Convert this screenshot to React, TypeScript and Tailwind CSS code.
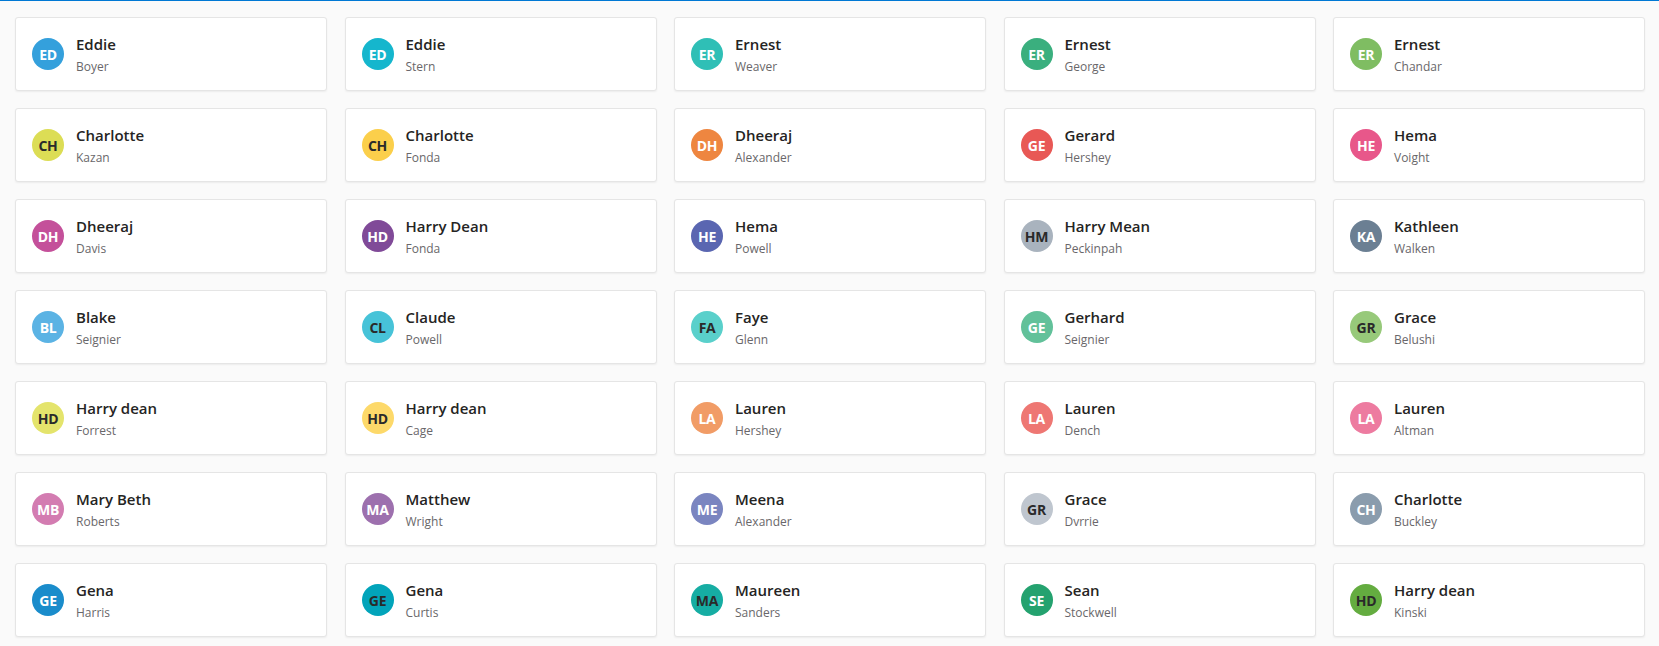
import React from "react";

type Person = {
  first: string;
  last: string;
  color: string;
  dark?: boolean;
};

// one entry per card, row by row
const people: Person[] = [
  { first: "Eddie", last: "Boyer", color: "#34a0dc" },
  { first: "Eddie", last: "Stern", color: "#15b6cd" },
  { first: "Ernest", last: "Weaver", color: "#2fbfb6" },
  { first: "Ernest", last: "George", color: "#3aaf7e" },
  { first: "Ernest", last: "Chandar", color: "#7fbd62" },

  { first: "Charlotte", last: "Kazan", color: "#dcdd55", dark: true },
  { first: "Charlotte", last: "Fonda", color: "#fbcf4b", dark: true },
  { first: "Dheeraj", last: "Alexander", color: "#ee8640" },
  { first: "Gerard", last: "Hershey", color: "#e85855" },
  { first: "Hema", last: "Voight", color: "#e8578a" },

  { first: "Dheeraj", last: "Davis", color: "#c4509a" },
  { first: "Harry Dean", last: "Fonda", color: "#804a98" },
  { first: "Hema", last: "Powell", color: "#5a66b1" },
  { first: "Harry Mean", last: "Peckinpah", color: "#a9b3be", dark: true },
  { first: "Kathleen", last: "Walken", color: "#6b7f93" },

  { first: "Blake", last: "Seignier", color: "#5bb3e4" },
  { first: "Claude", last: "Powell", color: "#47c3d8", dark: true },
  { first: "Faye", last: "Glenn", color: "#5ad0cb", dark: true },
  { first: "Gerhard", last: "Seignier", color: "#62c19a" },
  { first: "Grace", last: "Belushi", color: "#97c97a", dark: true },

  { first: "Harry dean", last: "Forrest", color: "#e4e46c", dark: true },
  { first: "Harry dean", last: "Cage", color: "#fdd96a", dark: true },
  { first: "Lauren", last: "Hershey", color: "#f19c66" },
  { first: "Lauren", last: "Dench", color: "#ee7773" },
  { first: "Lauren", last: "Altman", color: "#ed7ba0" },

  { first: "Mary Beth", last: "Roberts", color: "#d37cb1" },
  { first: "Matthew", last: "Wright", color: "#9d70ae" },
  { first: "Meena", last: "Alexander", color: "#7a85c0" },
  { first: "Grace", last: "Dvrrie", color: "#bfc6cf", dark: true },
  { first: "Charlotte", last: "Buckley", color: "#8a9cad" },

  { first: "Gena", last: "Harris", color: "#1a8ccb" },
  { first: "Gena", last: "Curtis", color: "#02a4ba", dark: true },
  { first: "Maureen", last: "Sanders", color: "#16ada3", dark: true },
  { first: "Sean", last: "Stockwell", color: "#24a26f" },
  { first: "Harry dean", last: "Kinski", color: "#64ac40", dark: true },
];

// two words -> first letter of each, one word -> first two letters
const getInitials = (name: string) => {
  const parts = name.split(" ");
  if (parts.length > 1) return (parts[0][0] + parts[1][0]).toUpperCase();
  return name.slice(0, 2).toUpperCase();
};

const PersonCard = ({ person }: { person: Person }) => {
  return (
    <div className="flex h-[74px] items-center gap-3 rounded-[3px] border border-[#e5e5e5] bg-white pl-4 shadow-[0_1px_2px_rgba(0,0,0,0.06)]">
      <div
        className={`flex h-8 w-8 shrink-0 items-center justify-center rounded-full text-[14px] font-bold tracking-[-0.3px] ${
          person.dark ? "text-[#2a2a2a]" : "text-white"
        }`}
        style={{ backgroundColor: person.color }}
      >
        {getInitials(person.first)}
      </div>
      <div className="flex flex-col">
        <span className="text-[15px] leading-5 font-semibold text-[#252423]">
          {person.first}
        </span>
        <span className="mt-[5px] text-[12px] leading-4 text-[#69676a]">
          {person.last}
        </span>
      </div>
    </div>
  );
};

const App = () => {
  return (
    <div className="min-h-[646px] w-full border-t border-[#0078d4] bg-[#fafafa] px-[15px] pt-4 font-['Open_Sans','Noto_Sans',sans-serif]">
      <div className="grid grid-cols-[repeat(5,312px)] gap-x-[17.5px] gap-y-[17px]">
        {people.map((p, i) => (
          <PersonCard key={i} person={p} />
        ))}
      </div>
    </div>
  );
};

export default App;
